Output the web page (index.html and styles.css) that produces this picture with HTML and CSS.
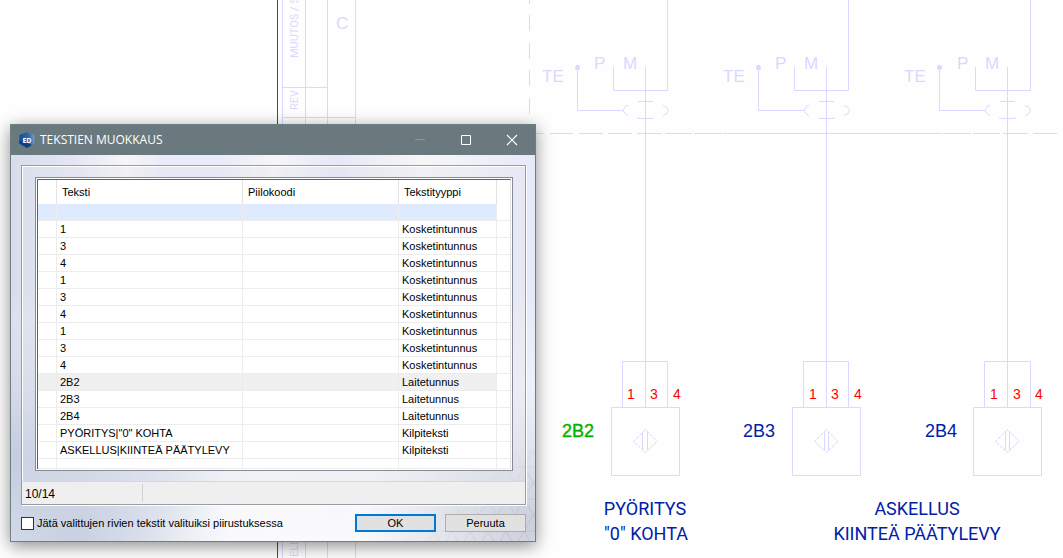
FILE: index.html
```html
<!DOCTYPE html>
<html lang="fi">
<head>
<meta charset="utf-8">
<title>Tekstien muokkaus</title>
<link rel="stylesheet" href="styles.css">
</head>
<body>
<main class="desktop">
  <svg class="drawing" role="img" aria-label="Kytkentäkaavio">
    <path class="frame" d="M277.500 0V558"/>
    <path class="wire" d="M282.500 0V558M305.500 0V558M327.500 0V558M355.500 0V558M282 87.500H327M282 117.500H355"/>
    <path class="wire" d="M529.500 0V4M529.500 15V31M529.500 43V59M529.500 70V86M529.500 98V114"/>
    <path class="wire" d="M530 133.500H543M550 133.500H573M579 133.500H603M608 133.500H632M637 133.500H662M665 133.500H692M694 133.500H722M723 133.500H942M943 133.500H971M973 133.500H1000M1003 133.500H1028M1033 133.500H1057"/>
    <text class="faint" x="336" y="29">C</text>
    <text class="faint side" transform="translate(298 58) rotate(-90)">MUUTOS / S</text>
    <text class="faint side" transform="translate(298 110) rotate(-90)">REV</text>
    <text class="faint side" transform="translate(298 557) rotate(-90)">ELIT</text>

    <g>
      <path class="wire" d="M577.500 68V110.500H623M613.500 67V90.500H667.500V0M645.500 67V407M638 101.500H653M637 117.500L639 118.500H652L654 117.500M628 105.500L625.500 106L623 110.500L625.500 114L628 115.500M663 105.500L666.500 107L668.500 110.500L666.500 114L663 115.500M622.500 407V361.500H667.500V407M611.500 407.500H679.500V475.500H611.500ZM642.500 432V450M647.500 432V450"/>
      <path class="wire dotted" d="M645.500 429.500L657 441.500L645.500 452.500L633.500 441.500Z"/>
      <circle class="node" cx="577.500" cy="67.500" r="2.500"/>
      <text class="faint" x="542" y="82">TE</text><text class="faint" x="594" y="69">P</text><text class="faint" x="623" y="69">M</text>
      <text class="pin" x="627" y="399">1</text><text class="pin" x="650" y="399">3</text><text class="pin" x="673" y="399">4</text>
      <text class="device chosen" x="562" y="437">2B2</text>
    </g>
    <g transform="translate(181 0)">
      <path class="wire" d="M577.500 68V110.500H623M613.500 67V90.500H667.500V0M645.500 67V407M638 101.500H653M637 117.500L639 118.500H652L654 117.500M628 105.500L625.500 106L623 110.500L625.500 114L628 115.500M663 105.500L666.500 107L668.500 110.500L666.500 114L663 115.500M622.500 407V361.500H667.500V407M611.500 407.500H679.500V475.500H611.500ZM643.500 432V450M647.500 432V450"/>
      <path class="wire dotted" d="M645.500 429.500L657 441.500L645.500 452.500L633.500 441.500Z"/>
      <circle class="node" cx="577.500" cy="67.500" r="2.500"/>
      <text class="faint" x="542" y="82">TE</text><text class="faint" x="594" y="69">P</text><text class="faint" x="623" y="69">M</text>
      <text class="pin" x="628" y="399">1</text><text class="pin" x="650" y="399">3</text><text class="pin" x="673" y="399">4</text>
      <text class="device" x="562" y="437">2B3</text>
    </g>
    <g transform="translate(362 0)">
      <path class="wire" d="M577.500 68V110.500H623M613.500 67V90.500H668.500V0M645.500 67V407M638 101.500H653M637 117.500L639 118.500H652L654 117.500M628 105.500L625.500 106L623 110.500L625.500 114L628 115.500M663 105.500L666.500 107L668.500 110.500L666.500 114L663 115.500M622.500 407V361.500H668.500V407M611.500 407.500H679.500V475.500H611.500ZM643.500 432V450M647.500 432V450"/>
      <path class="wire dotted" d="M645.500 429.500L657 441.500L645.500 452.500L633.500 441.500Z"/>
      <circle class="node" cx="577.500" cy="67.500" r="2.500"/>
      <text class="faint" x="542" y="82">TE</text><text class="faint" x="595" y="69">P</text><text class="faint" x="623" y="69">M</text>
      <text class="pin" x="628" y="399">1</text><text class="pin" x="651" y="399">3</text><text class="pin" x="673" y="399">4</text>
      <text class="device" x="563" y="437">2B4</text>
    </g>
    <text class="plate" x="645" y="515">PYÖRITYS</text>
    <text class="plate" x="646" y="540">"0" KOHTA</text>
    <text class="plate" x="917" y="515">ASKELLUS</text>
    <text class="plate" x="917" y="540">KIINTEÄ PÄÄTYLEVY</text>
  </svg>

  <form class="dialog" role="dialog" aria-labelledby="dialog-title">
    <svg class="texture" viewBox="0 0 110 90" aria-hidden="true">
      <defs>
        <pattern id="tri" width="18" height="32" patternUnits="userSpaceOnUse"><path d="M0 0H18M0 16H18M0 0L9 16L18 0M9 16L0 32M9 16L18 32" fill="none" stroke="#b4b8c6" stroke-width="1"/></pattern>
        <linearGradient id="fade" x1="0.300" y1="0.100" x2="1" y2="0.700"><stop offset="0.200" stop-color="#000"/><stop offset="1" stop-color="#999"/></linearGradient>
        <mask id="corner"><rect width="110" height="90" fill="url(#fade)"/></mask>
      </defs>
      <rect width="110" height="90" fill="url(#tri)" mask="url(#corner)"/>
    </svg>
    <header class="titlebar">
      <svg class="app-icon" viewBox="0 0 16 16" aria-hidden="true">
        <defs><linearGradient id="hex" x1="0" y1="0.300" x2="1" y2="0.200"><stop offset="0" stop-color="#14509a"/><stop offset="0.600" stop-color="#2f66ac"/><stop offset="1" stop-color="#7c9cc8"/></linearGradient></defs>
        <path fill="url(#hex)" d="M8 0L15.500 3V11.500L8 16L0.500 11.500V3Z"/>
        <path fill="#0d3f83" d="M0.500 8L8 11L13 13L8 16L0.500 11.500Z"/>
        <text class="app-mark" x="8" y="11">ED</text>
      </svg>
      <h1 class="title" id="dialog-title">TEKSTIEN MUOKKAUS</h1>
      <button class="caption" type="button" aria-label="Pienennä" disabled><svg viewBox="0 0 12 12"><path stroke="#8a9698" d="M1 5.500H11"/></svg></button>
      <button class="caption" type="button" aria-label="Suurenna"><svg viewBox="0 0 12 12"><path stroke="#fff" d="M1.500 1.500H10.500V10.500H1.500Z"/></svg></button>
      <button class="caption" type="button" aria-label="Sulje"><svg viewBox="0 0 12 12"><path stroke="#fff" stroke-width="1.200" d="M1 1L11 11M11 1L1 11"/></svg></button>
    </header>
    <div class="content">
      <section class="group">
        <div class="grid-frame">
          <table class="grid">
            <colgroup><col class="c-mark"><col class="c-text"><col class="c-code"><col class="c-type"><col></colgroup>
            <thead><tr><th></th><th scope="col">Teksti</th><th scope="col">Piilokoodi</th><th scope="col">Tekstityyppi</th><th></th></tr></thead>
            <tbody>
              <tr class="entry"><td></td><td></td><td></td><td></td><td></td></tr>
              <tr><td></td><td>1</td><td></td><td>Kosketintunnus</td><td></td></tr>
              <tr><td></td><td>3</td><td></td><td>Kosketintunnus</td><td></td></tr>
              <tr><td></td><td>4</td><td></td><td>Kosketintunnus</td><td></td></tr>
              <tr><td></td><td>1</td><td></td><td>Kosketintunnus</td><td></td></tr>
              <tr><td></td><td>3</td><td></td><td>Kosketintunnus</td><td></td></tr>
              <tr><td></td><td>4</td><td></td><td>Kosketintunnus</td><td></td></tr>
              <tr><td></td><td>1</td><td></td><td>Kosketintunnus</td><td></td></tr>
              <tr><td></td><td>3</td><td></td><td>Kosketintunnus</td><td></td></tr>
              <tr><td></td><td>4</td><td></td><td>Kosketintunnus</td><td></td></tr>
              <tr class="selected"><td></td><td>2B2</td><td></td><td>Laitetunnus</td><td></td></tr>
              <tr><td></td><td>2B3</td><td></td><td>Laitetunnus</td><td></td></tr>
              <tr><td></td><td>2B4</td><td></td><td>Laitetunnus</td><td></td></tr>
              <tr><td></td><td>PYÖRITYS|"0" KOHTA</td><td></td><td>Kilpiteksti</td><td></td></tr>
              <tr><td></td><td>ASKELLUS|KIINTEÄ PÄÄTYLEVY</td><td></td><td>Kilpiteksti</td><td></td></tr>
              <tr class="rest"><td></td><td></td><td></td><td></td><td></td></tr>
            </tbody>
          </table>
        </div>
        <div class="status"><span class="count">10/14</span></div>
      </section>
      <footer class="actions">
        <input class="tick" type="checkbox" id="keep">
        <label class="tick-label" for="keep">Jätä valittujen rivien tekstit valituiksi piirustuksessa</label>
        <button class="button primary" type="submit">OK</button>
        <button class="button" type="button">Peruuta</button>
      </footer>
    </div>
  </form>
</main>
</body>
</html>
```
FILE: styles.css
```css
* { box-sizing: border-box; }
body { margin: 0; background: #fefefe; color: #000; font: 11px/16px "Liberation Sans", Arial, sans-serif; }
.desktop { position: relative; min-height: 100vh; overflow: hidden; }
.drawing { position: absolute; inset: 0; width: 100%; height: 100%; font-family: "Liberation Sans", Arial, sans-serif; }
.frame { stroke: #008000; fill: none; }
.wire { stroke: #d9d9ff; fill: none; }
.dotted { stroke-dasharray: 1 1; stroke: #c0c0f4; }
.node { fill: #d9d9ff; }
.faint { fill: #d9d9ff; font-size: 17px; }
.side { font-family: Roboto, "Liberation Sans", sans-serif; font-size: 11px; }
.pin { fill: #f00; font-size: 14px; }
.device { fill: #0020a8; font-size: 18px; }
.chosen { fill: #00b400; stroke: #00b400; stroke-width: 0.4px; }
.plate { fill: #0020a8; font-family: Roboto, "Liberation Sans", sans-serif; font-size: 18px; text-anchor: middle; }

.dialog {
  position: absolute; left: 10px; top: 124px; width: 526px;
  border: 1px solid #6f7d85;
  box-shadow: 0 4px 16px rgba(0, 0, 0, 0.45);
  background:
    radial-gradient(ellipse at 100% 96%, rgba(198, 202, 216, 0.9) 0, rgba(198, 202, 216, 0) 24%),
    radial-gradient(ellipse at 0 80%, #c3cce0 0, rgba(195, 204, 224, 0) 30%),
    radial-gradient(ellipse at 12% 100%, #cbd3e2 0, rgba(203, 211, 226, 0) 24%),
    linear-gradient(180deg, rgba(250, 250, 252, 0) 40%, #fafafc 100%),
    linear-gradient(90deg, #d8ddeb 0, #e3e6f5 12%, #f6f6f6 22%, #e8ebf9 29%, #e8ebf9 40%, #f6f6f6 50%, #e5e8f7 62%, #f6f6f6 78%, #f2f3f8 86%, #e6e9f8 100%);
}
.texture { position: absolute; right: 0; bottom: 0; width: 110px; height: 90px; }
.titlebar { display: flex; align-items: center; height: 30px; padding: 0 0 0 8px; background: #6a797d; }
.app-icon { width: 16px; height: 16px; margin-right: 5px; }
.app-mark { fill: #fff; font: bold 7px "Open Sans", sans-serif; text-anchor: middle; }
.title { flex: 1; margin: 0; color: #fff; font: 12px/16px "Open Sans", "Noto Sans", sans-serif; }
.caption { display: grid; place-items: center; width: 46px; height: 30px; padding: 0; border: 0; background: none; }
.caption svg { width: 12px; height: 12px; fill: none; }
.content { position: relative; padding: 10px 9px 9px 10px; }
.group { border: 1px solid #9a9da0; box-shadow: 1px 1px 0 #fff, inset 1px 1px 0 #fff; background: rgba(225, 228, 236, 0.3); }
.grid-frame { margin: 11px 12px 10px 13px; border: 1px solid #858b95; padding: 1px; background: #fff; }
.grid { width: 100%; border-collapse: separate; border-spacing: 0; table-layout: fixed; border-top: 1px solid #606060; border-left: 1px solid #606060; border-right: 1px solid #e3e3e3; }
.c-mark { width: 19px; }
.c-text { width: 186px; }
.c-code { width: 156px; }
.c-type { width: 98px; }
.grid th, .grid td { padding: 0 3px; border-right: 1px solid #ececec; text-align: left; font-weight: normal; white-space: nowrap; }
.grid th { height: 24px; padding: 0 5px; border-color: #e3e3e3; }
.grid td { height: 17px; border-bottom: 1px solid #ececec; }
.grid th:last-child, .grid td:last-child { border-right: 0; }
.entry td:not(:last-child) { background: #dfeaff; }
.selected td:not(:last-child) { background: #f0f0f0; }
.grid .rest td { height: 10px; }
.status { display: flex; height: 23px; padding: 2px 1px; border-top: 1px solid #d5d7da; background: #efefef; }
.count { width: 120px; padding: 2px; border-right: 1px solid #d0d0d0; font-size: 12px; line-height: 16px; }
.actions { display: flex; align-items: center; padding-top: 9px; }
.tick { appearance: none; width: 13px; height: 13px; margin: 0 3px 0 0; border: 1px solid #333; background: #fff; }
.tick:checked { background: #0078d7; }
.tick-label { flex: 1; }
.button { width: 81px; height: 18px; margin-left: 9px; padding: 0; border: 1px solid #adadad; background: #e1e1e1; color: #000; font: 11px/14px "Liberation Sans", Arial, sans-serif; }
.primary { border: 2px solid #0078d7; }
```
